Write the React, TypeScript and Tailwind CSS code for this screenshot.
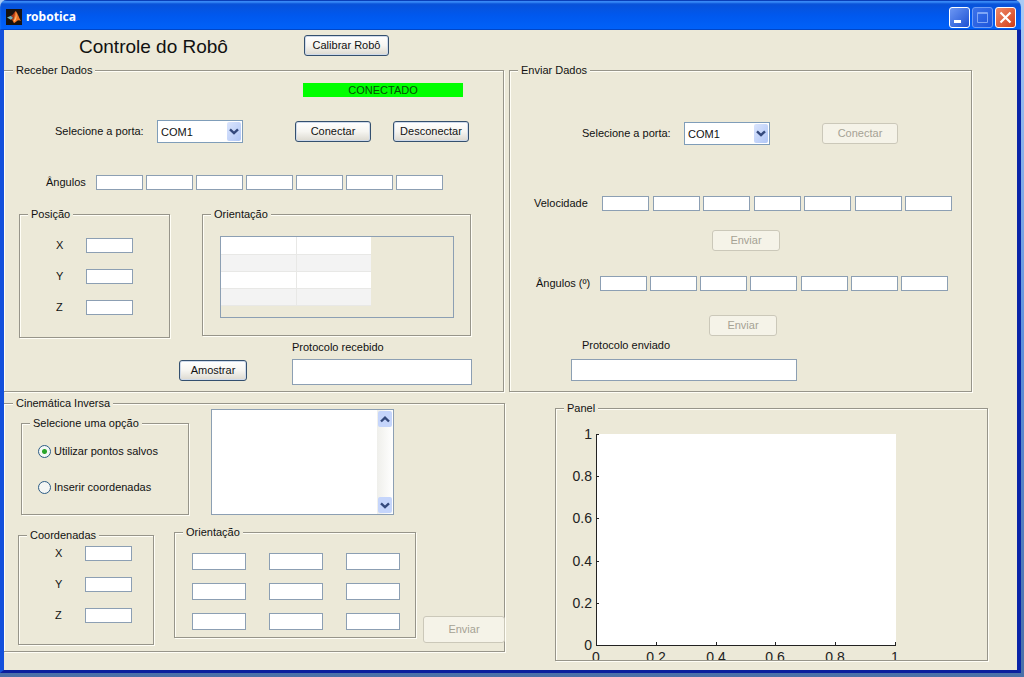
import { useId, useState } from 'react';
import type { ReactNode } from 'react';
import clsx from 'clsx';

const PORTS = ['COM1', 'COM2', 'COM3', 'COM4'];
const JOINTS = [1, 2, 3, 4, 5, 6, 7];
const TICKS = [0, 0.2, 0.4, 0.6, 0.8, 1];

type PanelProps = { title: string; className?: string; bodyClassName?: string; open?: boolean; children: ReactNode };

// Etched group box; `open` drops the left edge for panels that touch the window frame
function Panel({ title, className, bodyClassName, open, children }: PanelProps) {
  return (
    <fieldset
      className={clsx(
        'min-w-0 border-y border-r border-[#97958a] shadow-[1px_1px_0_#fffef6,inset_1px_1px_0_#fffef6]',
        !open && 'border-l',
        className,
      )}
    >
      <legend className={clsx('bg-[#ece9d8] px-[3px] leading-3', open ? 'ml-[9px]' : 'ml-2')}>{title}</legend>
      <div className={bodyClassName}>{children}</div>
    </fieldset>
  );
}

function Field({ label, className, id }: { label?: string; className?: string; id?: string }) {
  return (
    <input
      id={id}
      type="text"
      aria-label={label}
      className={clsx('block shrink-0 border border-[#8c9fb3] bg-white px-1 outline-none', className)}
    />
  );
}

type ButtonProps = { className?: string; disabled?: boolean; children: ReactNode };

function Button({ className, disabled, children }: ButtonProps) {
  return (
    <button
      type="button"
      disabled={disabled}
      className={clsx(
        'shrink-0 rounded-[3px] border text-center',
        disabled
          ? 'border-[#cbc8b9] bg-[#f5f3e8] text-[#a5a294]'
          : 'border-[#34506f] bg-linear-to-b from-white via-[#f6f5f1] to-[#dcd9d0] shadow-[inset_0_0_0_1px_#cfdaea]',
        className,
      )}
    >
      {children}
    </button>
  );
}

function Chevron({ up }: { up?: boolean }) {
  return (
    <svg width="10" height="7" viewBox="0 0 10 7" fill="none" stroke="#34497c" strokeWidth="2.4">
      <path d={up ? 'M1 5.5 5 1.7l4 3.8' : 'M1 1.3 5 5.1l4-3.8'} />
    </svg>
  );
}

function PortSelect() {
  const id = useId();
  return (
    <>
      <label htmlFor={id} className="w-[102px] shrink-0">Selecione a porta:</label>
      <div className="relative h-[23px] w-[86px] shrink-0">
        <select id={id} className="h-full w-full appearance-none border border-[#7f9db9] bg-white pt-[3px] pl-[3px] outline-none">
          {PORTS.map((port) => (
            <option key={port}>{port}</option>
          ))}
        </select>
        <span className="pointer-events-none absolute inset-y-0.5 right-0.5 flex w-[14px] items-center justify-center rounded-[2px] bg-linear-to-br from-[#dbe5fd] to-[#b0c6f6]">
          <Chevron />
        </span>
      </div>
    </>
  );
}

function JointRow({ label, className }: { label: string; className?: string }) {
  return (
    <div className={clsx('flex justify-between', className)}>
      {JOINTS.map((joint) => (
        <Field key={joint} label={`${label} ${joint}`} className="h-[15px] w-[47px]" />
      ))}
    </div>
  );
}

function AxisFields() {
  const id = useId();
  return (
    <div className="flex flex-col gap-4">
      {['X', 'Y', 'Z'].map((axis) => (
        <div key={axis} className="flex items-center">
          <label htmlFor={`${id}-${axis}`} className="w-[30px] leading-[15px]">{axis}</label>
          <Field id={`${id}-${axis}`} className="h-[15px] w-[47px]" />
        </div>
      ))}
    </div>
  );
}

function MatlabIcon() {
  return (
    <svg width="16" height="16" viewBox="0 0 16 16" aria-hidden="true">
      <rect width="16" height="16" fill="#17120f" />
      <path d="M1 8.6 5 6.8 7.400 9 4.800 10.800z" fill="#6fb0bb" />
      <path d="M5 6.800C7 6 8 3.500 9.500 2L8.800 8 6.500 11.600 4.800 10.800 7.400 9z" fill="#a93a1a" />
      <path d="M9.500 2C11.300 3 12.600 8 15 12c-2-1.200-3.200-.8-4.600.6L8 14.200 6.500 11.600C8.500 10 8.600 5 9.500 2z" fill="#ee7426" />
      <path d="M9.600 2.500c1 2.500.3 6-2 9.300l1.200.8C11 9.500 11.200 6 9.600 2.500z" fill="#fbb873" />
    </svg>
  );
}

function TitleBar() {
  const control = 'flex size-[21px] items-center justify-center rounded-[3px] border';
  return (
    <header className="flex h-[30px] shrink-0 items-center bg-linear-to-b from-[#0a4fd0] via-[#0058ee] to-[#0062fa] pt-1 pr-[5px] pl-[6px] shadow-[inset_0_1px_0_#0a3fb8,inset_0_3px_2px_#3a8cf8,inset_0_-1px_0_#0046c8]">
      <MatlabIcon />
      <span className="ml-1 flex-1 font-['Noto_Sans',sans-serif] text-[12px] leading-4 font-bold text-white">robotica</span>
      <div className="flex gap-0.5">
        <button type="button" aria-label="Minimizar" className={clsx(control, 'border-white bg-linear-to-br from-[#6d97f3] to-[#1e4fd2]')}>
          <svg width="15" height="15" viewBox="0 0 15 15">
            <path d="M2 10h7v3H2z" fill="#fff" />
          </svg>
        </button>
        <button type="button" aria-label="Maximizar" disabled className={clsx(control, 'border-[#6f9df5] bg-linear-to-br from-[#3c72ea] to-[#1c55dc]')}>
          <svg width="15" height="15" viewBox="0 0 15 15" fill="none" stroke="#7fa6f6">
            <path d="M2.500 2.500h10v10h-10zM2 3.500h11" />
          </svg>
        </button>
        <button type="button" aria-label="Fechar" className={clsx(control, 'border-white bg-linear-to-br from-[#ef8a68] to-[#cf3a12]')}>
          <svg width="15" height="15" viewBox="0 0 15 15" stroke="#fff" strokeWidth="2.200">
            <path d="m2.500 2.500 10 10m0-10-10 10" />
          </svg>
        </button>
      </div>
    </header>
  );
}

function ReceivePanel() {
  return (
    <Panel title="Receber Dados" open className="mr-px" bodyClassName="pb-[6px]">
      <div className="flex pt-[7px] pl-[299px]">
        <div className="w-[160px] bg-[#00ff00] text-center leading-[14px] text-[#064d06]">CONECTADO</div>
      </div>

      <div className="mt-[22px] flex h-6 items-center pl-[51px]">
        <PortSelect />
        <Button className="ml-[52px] h-[21px] w-[76px]">Conectar</Button>
        <Button className="ml-[22px] h-[21px] w-[76px]">Desconectar</Button>
      </div>

      <div className="mt-8 flex h-[15px] items-center pl-[42px]">
        <span className="w-[50px]">Ângulos</span>
        <JointRow label="Ângulos" className="w-[347px]" />
      </div>

      <div className="mt-[18px] flex items-start pl-[15px]">
        <Panel title="Posição" className="w-[151px]" bodyClassName="pt-[18px] pb-[22px] pl-9">
          <AxisFields />
        </Panel>
        <Panel title="Orientação" className="ml-8 w-[269px]" bodyClassName="pt-4 pb-[17px] pl-[17px]">
          <div className="h-[82px] w-[234px] border border-[#8c9fb3]">
            <table aria-label="Matriz de orientação" className="w-[150px] table-fixed border-collapse">
              <tbody>
                {[0, 1, 2, 3].map((row) => (
                  <tr key={row} className="h-[17px] bg-white even:bg-[#f3f3f3]">
                    <td className="border-r border-b border-[#e8e8e6]" />
                    <td className="border-b border-[#e8e8e6]" />
                  </tr>
                ))}
              </tbody>
            </table>
          </div>
        </Panel>
      </div>

      <div className="mt-[3px] flex items-end pl-[175px]">
        <Button className="mb-1 h-[21px] w-[68px]">Amostrar</Button>
        <div className="ml-[45px]">
          <label htmlFor="recebido" className="block leading-3">Protocolo recebido</label>
          <Field id="recebido" className="mt-[6px] h-[26px] w-[180px]" />
        </div>
      </div>
    </Panel>
  );
}

function KinematicsPanel() {
  const [mode, setMode] = useState('salvos');
  const radios = [
    { value: 'salvos', label: 'Utilizar pontos salvos' },
    { value: 'inserir', label: 'Inserir coordenadas' },
  ];

  return (
    <Panel title="Cinemática Inversa" open className="mt-[5px]" bodyClassName="pb-[6px]">
      <div className="flex items-end pl-[17px]">
        <Panel title="Selecione uma opção" className="w-[168px]" bodyClassName="pt-[15px] pb-5 pl-4">
          <div className="flex flex-col gap-[22px]">
            {radios.map(({ value, label }) => (
              <label key={value} className="flex h-[14px] items-center gap-[3px]">
                <input
                  type="radio"
                  name="modo"
                  value={value}
                  checked={mode === value}
                  onChange={() => setMode(value)}
                  className="size-[13px] appearance-none rounded-full border border-[#2c5c85] bg-[#f4f6f4] checked:bg-[radial-gradient(circle,#2aa52a_0_2px,#f4f8f4_3px)]"
                />
                {label}
              </label>
            ))}
          </div>
        </Panel>
        <div className="ml-[22px] flex h-[106px] w-[183px] border border-[#8c9fb3] bg-white">
          <select multiple aria-label="Pontos salvos" className="h-full flex-1 appearance-none outline-none" />
          <div className="flex w-4 flex-col justify-between bg-linear-to-r from-[#efefeb] to-white">
            <button type="button" aria-label="Rolar para cima" className="m-px flex h-4 items-center justify-center rounded-[2px] bg-[#c5d5fb]">
              <Chevron up />
            </button>
            <button type="button" aria-label="Rolar para baixo" className="m-px flex h-4 items-center justify-center rounded-[2px] bg-[#c5d5fb]">
              <Chevron />
            </button>
          </div>
        </div>
      </div>

      <div className="mt-[11px] flex min-h-[119px] items-end pl-[14px]">
        <Panel title="Coordenadas" className="w-[136px]" bodyClassName="pt-[5px] pb-[21px] pl-9">
          <AxisFields />
        </Panel>
        <Panel title="Orientação" className="ml-5 w-[242px] self-start" bodyClassName="pt-[15px] pb-[7px] pl-[17px]">
          <div className="grid w-[208px] grid-cols-3 gap-x-[23px] gap-y-[13px]">
            {[1, 2, 3, 4, 5, 6, 7, 8, 9].map((n) => (
              <Field key={n} label={`Orientação ${n}`} className="h-[17px] w-[54px]" />
            ))}
          </div>
        </Panel>
        <Button disabled className="-mr-px mb-0.5 ml-auto h-[27px] w-[82px]">Enviar</Button>
      </div>
    </Panel>
  );
}

function SendPanel() {
  return (
    <Panel title="Enviar Dados" className="mr-[45px]" bodyClassName="pt-[45px] pb-[10px]">
      <div className="flex h-6 items-center pl-[72px]">
        <PortSelect />
        <Button disabled className="ml-[52px] h-[21px] w-[76px]">Conectar</Button>
      </div>

      <div className="mt-[51px] flex h-[15px] items-center pl-6">
        <span className="w-[68px]">Velocidade</span>
        <JointRow label="Velocidade" className="w-[350px]" />
      </div>
      <Button disabled className="mt-[19px] ml-[202px] block h-[21px] w-[68px]">Enviar</Button>

      <div className="mt-[25px] flex h-[15px] items-center pl-[26px]">
        <span className="w-16">Ângulos (º)</span>
        <JointRow label="Ângulos (º)" className="w-[348px]" />
      </div>
      <Button disabled className="mt-6 ml-[199px] block h-[21px] w-[68px]">Enviar</Button>

      <label htmlFor="enviado" className="mt-[3px] ml-[72px] block leading-3">Protocolo enviado</label>
      <Field id="enviado" className="mt-2 ml-[61px] h-[22px] w-[226px]" />
    </Panel>
  );
}

function PlotPanel() {
  return (
    <Panel title="Panel" className="mt-[10px] mr-[29px] ml-[46px]">
      {/* the x labels run past the bottom edge of the group box */}
      <svg className="block h-[246px] w-full" fontSize="14" fill="#222">
        <rect x="40" y="20" width="300" height="212" fill="#fff" />
        <path d="M40.500 20v212M40 231.500h300" stroke="#222" />
        {TICKS.map((tick) => {
          const x = 40 + Math.round(tick * 299);
          const y = 231 - Math.round(tick * 211);
          return (
            <g key={tick}>
              <path d={`M${x + 0.5} 228v4M40 ${y + 0.5}h3`} stroke="#222" />
              <text x="36" y={y + 5} textAnchor="end">{tick}</text>
              <text x={x} y="248" textAnchor="middle">{tick}</text>
            </g>
          );
        })}
      </svg>
    </Panel>
  );
}

export default function App() {
  return (
    <div className="flex min-h-screen flex-col bg-linear-to-b from-[#a9cbf5] via-[#5f92dc] to-[#4a70a8] pr-[3px] pb-1 font-['Liberation_Sans',Arial,sans-serif] text-[11px] text-[#111]">
      <div className="flex flex-1 flex-col overflow-hidden rounded-t-[7px] bg-[#ece9d8]">
        <TitleBar />
        <main className="flex-1 border-r-[4px] border-b-[3px] border-l-[4px] border-r-[#0a24a8] border-b-[#0a1f9c] border-l-[#1350dc] pb-2">
          <div className="flex h-[34px] items-center">
            <h1 className="w-[300px] pl-[75px] text-[19px] leading-6">Controle do Robô</h1>
            <Button className="mb-1 h-[21px] w-[85px]">Calibrar Robô</Button>
          </div>
          <div className="grid grid-cols-[501fr_508fr] gap-x-1">
            <div>
              <ReceivePanel />
              <KinematicsPanel />
            </div>
            <div>
              <SendPanel />
              <PlotPanel />
            </div>
          </div>
        </main>
      </div>
    </div>
  );
}
